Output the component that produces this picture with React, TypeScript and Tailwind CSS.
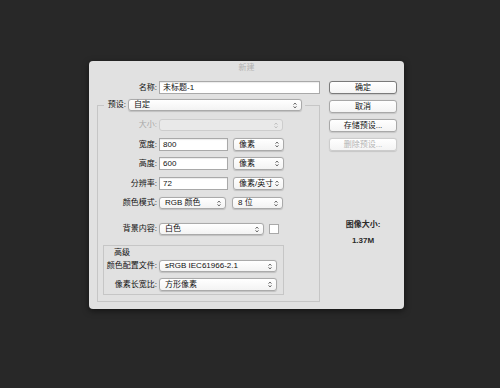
import { FunctionComponent, ReactNode } from 'react';

const font = "font-['Liberation_Sans','Noto_Sans_CJK_SC',sans-serif]";

const Arrows = ({ color = '#333' }: { color?: string }) => (
    <svg width="4" height="7" viewBox="0 0 4 7" className="shrink-0">
        <path d="M0.6 2.6 L2 1.1 L3.4 2.6 M0.6 4.4 L2 5.9 L3.4 4.4" stroke={color} fill="none" strokeWidth="0.9" />
    </svg>
);

const Select = ({ value, w, h = 'h-[13px]', disabled }: { value?: string; w: string; h?: string; disabled?: boolean }) => (
    <div
        className={`${w} ${h} flex items-center justify-between pl-[5px] pr-[4px] rounded-[3px] border ${
            disabled ? 'border-[#cdcdcd] bg-[#e9e9e9]' : 'border-[#aaaaaa] bg-gradient-to-b from-white to-[#f3f3f3] shadow-[0_0.5px_1px_rgba(0,0,0,0.15)]'
        }`}
    >
        <span className="text-[8px] leading-none text-[#111]">{value}</span>
        <Arrows color={disabled ? '#b5b5b5' : '#444'} />
    </div>
);

const Input = ({ value, w }: { value: string; w: string }) => (
    <div className={`${w} h-[13px] flex items-center pl-[3px] bg-white border border-[#a9a9a9] shadow-[inset_0_1px_1px_rgba(0,0,0,0.08)]`}>
        <span className="text-[8px] leading-none text-[#111]">{value}</span>
    </div>
);

const Row = ({ label, lw = 'w-[59px]', muted, mt, children }: { label: string; lw?: string; muted?: boolean; mt: string; children: ReactNode }) => (
    <div className={`flex items-center ${mt}`}>
        <span className={`${lw} text-right text-[8px] leading-none ${muted ? 'text-[#a8a8a8]' : 'text-[#111]'}`}>{label}</span>
        <div className="ml-[2px] flex items-center">{children}</div>
    </div>
);

const Button = ({ label, primary, disabled, mt }: { label: string; primary?: boolean; disabled?: boolean; mt?: string }) => (
    <div
        className={`${mt ?? ''} w-[68px] h-[13px] flex items-center justify-center rounded-[3px] bg-gradient-to-b from-white to-[#f4f4f4] border text-[8px] leading-none ${
            primary ? 'border-[#7a7a7a]' : disabled ? 'border-[#cccccc]' : 'border-[#a8a8a8]'
        } ${disabled ? 'text-[#b3b3b3]' : 'text-[#111]'} shadow-[0_0.5px_1px_rgba(0,0,0,0.12)]`}
    >
        {label}
    </div>
);

const App: FunctionComponent = () => {
    return (
        <div className={`w-[500px] h-[388px] bg-[#282828] pt-[61px] pl-[89px] ${font}`}>
            <div className="w-[315px] h-[248px] bg-[#e1e1e1] rounded-[4px] flex flex-col shadow-[0_2px_6px_rgba(0,0,0,0.5)]">
                <div className="h-[14px] flex items-center justify-center text-[8px] text-[#b2b2b2]">新建</div>

                <div className="flex pt-[6px]">
                    {/* left */}
                    <div className="w-[240px]">
                        <div className="flex items-center">
                            <span className="w-[68px] text-right text-[8px] leading-none text-[#111]">名称:</span>
                            <div className="ml-[2px]">
                                <Input value="未标题-1" w="w-[161px]" />
                            </div>
                        </div>

                        <fieldset className="ml-[8px] mt-[5px] w-[223px] border border-[#c6c6c6] pt-[8px] pb-[6px]">
                            <legend className="ml-[6px] px-[3px]">
                                <div className="flex items-center">
                                    <span className="w-[19px] text-right text-[8px] leading-none text-[#111]">预设:</span>
                                    <div className="ml-[2px]">
                                        <Select value="自定" w="w-[174px]" h="h-[12px]" />
                                    </div>
                                </div>
                            </legend>

                            <Row label="大小:" muted mt="">
                                <Select w="w-[124px]" h="h-[12px]" disabled />
                            </Row>
                            <Row label="宽度:" mt="mt-[7px]">
                                <Input value="800" w="w-[69px]" />
                                <div className="ml-[5px]">
                                    <Select value="像素" w="w-[51px]" />
                                </div>
                            </Row>
                            <Row label="高度:" mt="mt-[6px]">
                                <Input value="600" w="w-[69px]" />
                                <div className="ml-[5px]">
                                    <Select value="像素" w="w-[51px]" />
                                </div>
                            </Row>
                            <Row label="分辨率:" mt="mt-[7px]">
                                <Input value="72" w="w-[69px]" />
                                <div className="ml-[5px]">
                                    <Select value="像素/英寸" w="w-[51px]" />
                                </div>
                            </Row>
                            <Row label="颜色模式:" mt="mt-[7px]">
                                <Select value="RGB 颜色" w="w-[67px]" h="h-[12px]" />
                                <div className="ml-[6px]">
                                    <Select value="8 位" w="w-[51px]" h="h-[12px]" />
                                </div>
                            </Row>
                            <Row label="背景内容:" mt="mt-[14px]">
                                <Select value="白色" w="w-[105px]" h="h-[12px]" />
                                <div className="ml-[5px] w-[10px] h-[10px] bg-white border border-[#a9a9a9]" />
                            </Row>

                            <div className="ml-[5px] mt-[10px] w-[181px] border border-[#c6c6c6] pt-[1px] pb-[3px]">
                                <div className="pl-[10px] text-[8px] leading-[12px] text-[#111]">高级</div>
                                <Row label="颜色配置文件:" lw="w-[53px]" mt="mt-[1px]">
                                    <Select value="sRGB IEC61966-2.1" w="w-[118px]" h="h-[12px]" />
                                </Row>
                                <Row label="像素长宽比:" lw="w-[53px]" mt="mt-[6px]">
                                    <Select value="方形像素" w="w-[118px]" />
                                </Row>
                            </div>
                        </fieldset>
                    </div>

                    {/* right */}
                    <div className="w-[68px] flex flex-col">
                        <Button label="确定" primary />
                        <Button label="取消" mt="mt-[6px]" />
                        <Button label="存储预设..." mt="mt-[6px]" />
                        <Button label="删除预设..." disabled mt="mt-[6px]" />
                        <div className="mt-[69px] text-center text-[8px] leading-[10px] font-bold text-[#2a2a2a]">图像大小:</div>
                        <div className="mt-[6px] text-center text-[8px] leading-[10px] font-bold text-[#2a2a2a]">1.37M</div>
                    </div>
                </div>
            </div>
        </div>
    );
};

export default App;
